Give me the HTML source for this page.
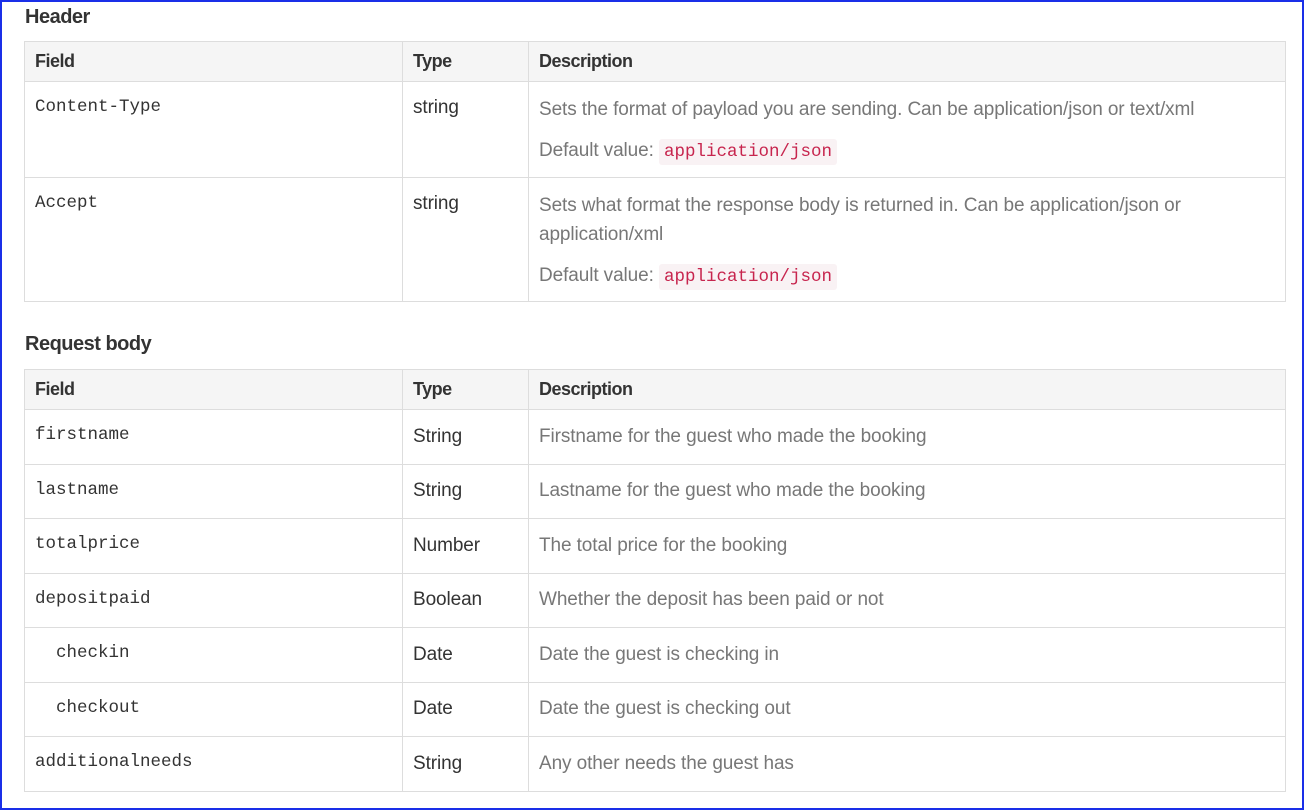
<!DOCTYPE html>
<html><head><style>
html,body{margin:0;padding:0;}
body{width:1304px;height:810px;box-sizing:border-box;border:2px solid #1a2fe8;background:#fff;position:relative;overflow:hidden;font-family:"Liberation Sans",sans-serif;color:#333;}
h3{position:absolute;left:23px;margin:0;font-size:20px;font-weight:bold;letter-spacing:-0.5px;}
table{position:absolute;left:22px;width:1262px;border-collapse:collapse;table-layout:fixed;}
td,th{border:1px solid #ddd;vertical-align:top;text-align:left;padding:0 10px;font-size:19px;letter-spacing:-0.1px;}
th{background:#f5f5f5;height:39px;vertical-align:middle;font-weight:bold;letter-spacing:-0.5px;font-size:18px;}
.m{font-family:"Liberation Mono",monospace;font-size:17.5px;letter-spacing:0;}
.d{color:#777;}
code{font-family:"Liberation Mono",monospace;font-size:17.5px;letter-spacing:0;color:#c7254e;background:#f9f2f4;padding:3px 5px;border-radius:3px;}
.t2 td{height:53.5px;vertical-align:middle;}
.t2 td.m{vertical-align:top;padding-top:15px;height:38.5px;}
</style></head><body>
<h3 style="top:4px">Header</h3>
<table style="top:39px">
<col style="width:378px"><col style="width:126px"><col>
<tr><th>Field</th><th>Type</th><th>Description</th></tr>
<tr style="height:96px"><td class="m" style="padding-top:15px">Content-Type</td><td style="padding-top:15px">string</td><td class="d" style="padding-top:13px;line-height:29px">Sets the format of payload you are sending. Can be application/json or text/xml<div style="margin-top:12px">Default value: <code>application/json</code></div></td></tr>
<tr style="height:124px"><td class="m" style="padding-top:15px">Accept</td><td style="padding-top:15px">string</td><td class="d" style="padding-top:13px;line-height:29px">Sets what format the response body is returned in. Can be application/json or application/xml<div style="margin-top:12px">Default value: <code>application/json</code></div></td></tr>
</table>
<h3 style="top:331px">Request body</h3>
<table class="t2" style="top:367px">
<col style="width:378px"><col style="width:126px"><col>
<tr><th>Field</th><th>Type</th><th>Description</th></tr>
<tr><td class="m">firstname</td><td>String</td><td class="d">Firstname for the guest who made the booking</td></tr>
<tr><td class="m">lastname</td><td>String</td><td class="d">Lastname for the guest who made the booking</td></tr>
<tr><td class="m">totalprice</td><td>Number</td><td class="d">The total price for the booking</td></tr>
<tr><td class="m">depositpaid</td><td>Boolean</td><td class="d">Whether the deposit has been paid or not</td></tr>
<tr><td class="m" style="padding-left:31px">checkin</td><td>Date</td><td class="d">Date the guest is checking in</td></tr>
<tr><td class="m" style="padding-left:31px">checkout</td><td>Date</td><td class="d">Date the guest is checking out</td></tr>
<tr><td class="m">additionalneeds</td><td>String</td><td class="d">Any other needs the guest has</td></tr>
</table>
</body></html>
